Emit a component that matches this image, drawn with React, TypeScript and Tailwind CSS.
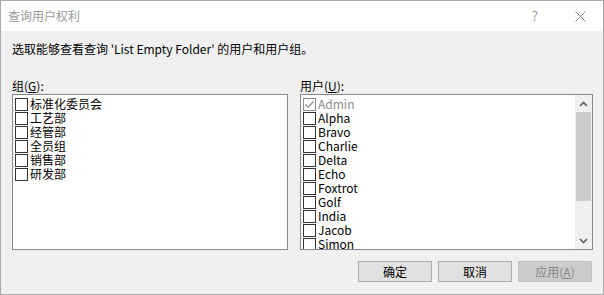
const GROUPS = ["标准化委员会", "工艺部", "经管部", "全员组", "销售部", "研发部"];

const USERS = [
  "Alpha",
  "Bravo",
  "Charlie",
  "Delta",
  "Echo",
  "Foxtrot",
  "Golf",
  "India",
  "Jacob",
  "Simon",
];

const FONT = "font-['Noto_Sans_CJK_SC','Noto_Sans',sans-serif]";

function Box({ checked = false, disabled = false }: { checked?: boolean; disabled?: boolean }) {
  return (
    <span
      className={`w-[13px] h-[13px] shrink-0 bg-white border flex items-center justify-center ${
        disabled ? "border-[#8c8c8c]" : "border-[#333333]"
      }`}
    >
      {checked && (
        <svg width="11" height="11" viewBox="0 0 11 11">
          <path d="M1.5 5.5 L4.2 8.2 L9.5 2.5" fill="none" stroke="#8c8c8c" strokeWidth="1.2" />
        </svg>
      )}
    </span>
  );
}

function Row({
  label,
  checked,
  disabled,
}: {
  label: string;
  checked?: boolean;
  disabled?: boolean;
}) {
  return (
    <div className="h-[14px] flex items-center gap-[2px]">
      <Box checked={checked} disabled={disabled} />
      <span className={`text-[12px] leading-[14px] whitespace-nowrap ${disabled ? "text-[#8c8c8c]" : "text-black"}`}>
        {label}
      </span>
    </div>
  );
}

function Chevron({ up }: { up?: boolean }) {
  return (
    <svg width="9" height="6" viewBox="0 0 9 6">
      <path
        d={up ? "M1 5 L4.5 1.5 L8 5" : "M1 1 L4.5 4.5 L8 1"}
        fill="none"
        stroke="#606060"
        strokeWidth="1.6"
      />
    </svg>
  );
}

function Button({ label, disabled }: { label: React.ReactNode; disabled?: boolean }) {
  return (
    <div
      className={`w-[74px] h-[21px] flex items-center justify-center border text-[12px] ${
        disabled
          ? "bg-[#cccccc] border-[#bfbfbf] text-[#838383]"
          : "bg-[#e1e1e1] border-[#adadad] text-black"
      }`}
    >
      {label}
    </div>
  );
}

export default function App() {
  return (
    <div className={`w-[604px] h-[295px] border border-[#aaaaaa] flex flex-col bg-[#f0f0f0] ${FONT}`}>
      {/* Title bar */}
      <div className="h-[30px] bg-white flex items-center pl-[7px] pr-[17px] shrink-0">
        <span className="text-[12px] text-[#999999] flex-1">查询用户权利</span>
        <span className="text-[13px] text-[#999999] mr-[37px]">?</span>
        <svg width="11" height="11" viewBox="0 0 11 11">
          <path d="M0.5 0.5 L10.5 10.5 M10.5 0.5 L0.5 10.5" stroke="#888888" strokeWidth="1" />
        </svg>
      </div>

      {/* Body */}
      <div className="flex flex-col pl-[11px] pr-[10px] pt-[10px]">
        <p className="text-[12px] leading-[16px] text-black m-0">
          选取能够查看查询 'List Empty Folder' 的用户和用户组。
        </p>

        <div className="flex gap-[12px] mt-[21px]">
          {/* Groups */}
          <div className="w-[276px] flex flex-col">
            <span className="text-[12px] leading-[16px] text-black">
              组(<span className="underline">G</span>):
            </span>
            <div className="h-[156px] bg-white border border-[#828790] pl-[2px] pt-[2px] flex flex-col">
              {GROUPS.map((g) => (
                <Row key={g} label={g} />
              ))}
            </div>
          </div>

          {/* Users */}
          <div className="flex-1 flex flex-col">
            <span className="text-[12px] leading-[16px] text-black">
              用户(<span className="underline">U</span>):
            </span>
            <div className="h-[156px] bg-white border border-[#828790] flex overflow-hidden">
              <div className="flex-1 pl-[2px] pt-[2px] flex flex-col overflow-hidden">
                <Row label="Admin" checked disabled />
                {USERS.map((u) => (
                  <Row key={u} label={u} />
                ))}
              </div>
              <div className="w-[17px] bg-[#f0f0f0] flex flex-col items-center">
                <div className="h-[17px] w-full flex items-center justify-center">
                  <Chevron up />
                </div>
                <div className="w-[15px] h-[89px] bg-[#cdcdcd]" />
                <div className="flex-1" />
                <div className="h-[17px] w-full flex items-center justify-center">
                  <Chevron />
                </div>
              </div>
            </div>
          </div>
        </div>

        {/* Buttons */}
        <div className="flex justify-end gap-[6px] mt-[11px] pr-[1px]">
          <Button label="确定" />
          <Button label="取消" />
          <Button
            disabled
            label={
              <span>
                应用(<span className="underline">A</span>)
              </span>
            }
          />
        </div>
      </div>
    </div>
  );
}
